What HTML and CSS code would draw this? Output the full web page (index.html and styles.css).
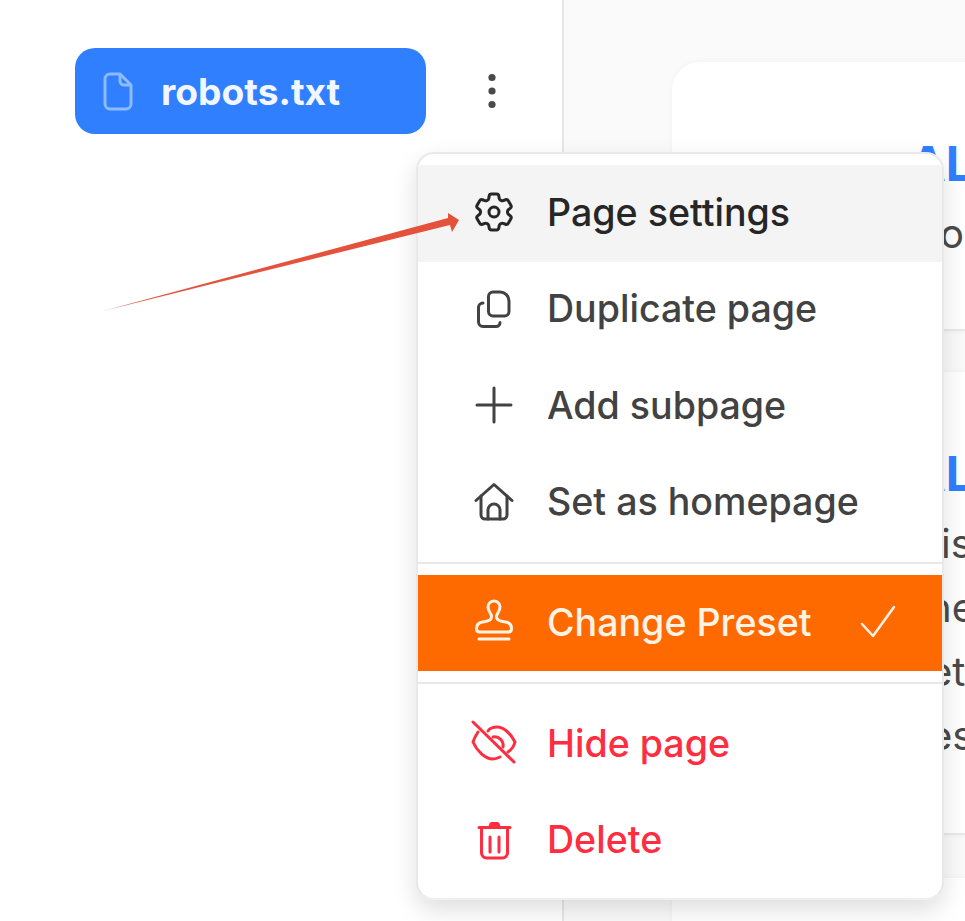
FILE: index.html
```html
<!DOCTYPE html>
<html lang="en">
<head>
<meta charset="utf-8">
<title>Page menu</title>
<link rel="stylesheet" href="styles.css">
</head>
<body>
<div class="app">
  <aside class="sidebar">
    <div class="page-row">
      <a class="page-item">
        <svg class="file-icon" viewBox="0 0 32 41"><path d="M8 3h10l11 11v19a5 5 0 0 1-5 5H8a5 5 0 0 1-5-5V8a5 5 0 0 1 5-5z"/><path d="M18 3v7a4 4 0 0 0 4 4h7"/></svg>
        <span>robots.txt</span>
      </a>
      <svg class="kebab" viewBox="0 0 12 40"><circle cx="6" cy="6.500" r="3.600"/><circle cx="6" cy="20" r="3.600"/><circle cx="6" cy="33.500" r="3.600"/></svg>
    </div>
  </aside>
  <main class="content">
    <section class="card card-one">
      <h2 class="card-title">AL</h2>
      <p class="line line-o">o</p>
    </section>
    <section class="card card-two">
      <h2 class="card-title">AL</h2>
      <p class="line line-is">is</p>
      <p class="line line-ne">ne</p>
      <p class="line line-et">et</p>
      <p class="line line-es">es</p>
    </section>
    <section class="card card-three"></section>
  </main>
</div>

<nav class="menu">
  <a class="item hover">
    <svg class="icon" viewBox="0 0 48 48"><g transform="scale(2)"><path d="M9.594 3.940c.09-.542.56-.94 1.110-.94h2.593c.55 0 1.020.398 1.110.94l.213 1.281c.063.374.313.686.645.870.074.040.147.083.22.127.325.196.72.257 1.075.124l1.217-.456a1.125 1.125 0 0 1 1.370.49l1.296 2.247a1.125 1.125 0 0 1-.26 1.431l-1.003.827c-.293.241-.438.613-.43.992a7.723 7.723 0 0 1 0 .255c-.008.378.137.75.43.991l1.004.827c.424.35.534.955.26 1.430l-1.298 2.247a1.125 1.125 0 0 1-1.369.491l-1.217-.456c-.355-.133-.75-.072-1.076.124a6.470 6.470 0 0 1-.22.128c-.331.183-.581.495-.644.869l-.213 1.281c-.09.543-.56.94-1.110.94h-2.594c-.55 0-1.019-.398-1.110-.94l-.213-1.281c-.062-.374-.312-.686-.644-.87a6.520 6.520 0 0 1-.22-.127c-.325-.196-.72-.257-1.076-.124l-1.217.456a1.125 1.125 0 0 1-1.369-.49l-1.297-2.247a1.125 1.125 0 0 1 .26-1.431l1.004-.827c.292-.24.437-.613.43-.991a6.932 6.932 0 0 1 0-.255c.007-.38-.138-.751-.43-.992l-1.004-.827a1.125 1.125 0 0 1-.26-1.430l1.297-2.247a1.125 1.125 0 0 1 1.370-.491l1.216.456c.356.133.751.072 1.076-.124.072-.044.146-.086.22-.128.332-.183.582-.495.644-.869l.214-1.280Z" stroke-width="1.500"/><circle cx="12" cy="12" r="2.500" stroke-width="1.500"/></g></svg>
    <span>Page settings</span>
  </a>
  <a class="item">
    <svg class="icon" viewBox="0 0 48 48"><path d="M23 7h7a9 9 0 0 1 9 9v10.500a4.500 4.500 0 0 1-4.500 4.500H23a4.500 4.500 0 0 1-4.500-4.500V11.500A4.500 4.500 0 0 1 23 7z"/><path d="M13 18a4.500 4.500 0 0 0-4.500 4.500V37a4.500 4.500 0 0 0 4.500 4.500h13a4 4 0 0 0 4-4"/></svg>
    <span>Duplicate page</span>
  </a>
  <a class="item">
    <svg class="icon" viewBox="0 0 48 48"><path d="M24 7v34M7 24h34"/></svg>
    <span>Add subpage</span>
  </a>
  <a class="item">
    <svg class="icon" viewBox="0 0 48 48"><path d="M6 22.500 24 6.500l18 16"/><path d="M11 18v19a4 4 0 0 0 4 4h18a4 4 0 0 0 4-4V18"/><path d="M18 41V32a6 6 0 0 1 12 0v9"/></svg>
    <span>Set as homepage</span>
  </a>
  <hr class="sep">
  <a class="item active">
    <svg class="icon" viewBox="0 0 48 48"><path d="M18 9a6 6 0 0 1 12 0c0 4.500-3.500 6.500-3.500 9.500 0 3.500 3 4.500 6 5l3 .5c3.500.6 6 3 6 6.500 0 2-1 3.500-3 3.500H9.500c-2 0-3-1.500-3-3.500 0-3.500 2.500-5.900 6-6.500l3-.5c3-.5 6-1.500 6-5 0-3-3.500-5-3.500-9.500z"/><path d="M9 41h30"/></svg>
    <span>Change Preset</span>
    <svg class="check" viewBox="0 0 36 34"><path d="M2 19 13 31 34 2"/></svg>
  </a>
  <hr class="sep">
  <a class="item danger">
    <svg class="icon" viewBox="0 0 48 48"><path d="M3 3l41 40"/><path d="M18 12c2-3 6-4 9-4 7 0 14 7 18 15-1 4-4 8-7 10"/><path d="M8 13c-2 3-4 7-5 10 4 9 12 17 20 17 3 0 5-1 7-2"/><path d="M23 18c6-1 11 4 10 10"/></svg>
    <span>Hide page</span>
  </a>
  <a class="item danger">
    <svg class="icon" viewBox="0 0 48 48"><path class="solid" d="M18 11.500l1.500-4a2 2 0 0 1 2-1.500h6a2 2 0 0 1 2 1.500l1.500 4z"/><path d="M9 11.500h31"/><path d="M11.500 13v24a5 5 0 0 0 5 5h16a5 5 0 0 0 5-5V13"/><path d="M20 21v15M29 21v15"/></svg>
    <span>Delete</span>
  </a>
</nav>

<svg class="arrow" viewBox="0 0 362 104"><polygon points="3,101 348,8 348,3 359,10 352,22 350,15"/></svg>
</body>
</html>
```
FILE: styles.css
```css
* { box-sizing: border-box; }
html, body { margin: 0; padding: 0; }
body {
  position: relative;
  width: 965px;
  height: 921px;
  overflow: hidden;
  background: #fff;
  font-family: Inter, "Liberation Sans", sans-serif;
}
.app { display: flex; height: 921px; }

.sidebar {
  flex: 0 0 564px;
  padding: 48px 0 0 75px;
  background: #fff;
  border-right: 2px solid #e6e6e6;
}
.page-row { display: flex; align-items: center; gap: 60px; }
.page-item {
  display: flex;
  align-items: center;
  gap: 27px;
  width: 351px;
  height: 86px;
  padding-left: 27px;
  border-radius: 20px;
  background: #2f7fff;
  color: #f2f7ff;
  font-size: 37.200px;
  font-weight: 700;
}
.file-icon { width: 32px; height: 41px; flex: none; fill: none; stroke: #8dbbff; stroke-width: 3; stroke-linejoin: round; }
.kebab { width: 12px; height: 40px; fill: #4a4a4a; }

.content {
  flex: 1;
  min-width: 0;
  padding: 62px 0 0 108px;
  background: #fafafa;
  overflow: hidden;
  display: flex;
  flex-direction: column;
  gap: 41px;
}
.card {
  flex: none;
  width: 400px;
  padding: 70px 0 63px;
  background: #fff;
  border-bottom: 2px solid #e8e8e8;
  box-shadow: 0 0 6px rgba(0, 0, 0, .04);
  overflow: hidden;
  white-space: nowrap;
}
.card-one { border-top-left-radius: 28px; }
.card-two { padding-bottom: 65px; }
.card-three { height: 120px; margin-top: 2px; }
.card-title {
  margin: 0 0 6px;
  padding-left: 238px;
  font-size: 48px;
  line-height: 64px;
  font-weight: 700;
  color: #2f7fff;
}
.line { margin: 0; font-size: 40px; line-height: 64px; color: #4a4a4a; }
.line-o { padding-left: 268px; }
.line-is { padding-left: 269px; }
.line-ne { padding-left: 256px; }
.line-et { padding-left: 257px; }
.line-es { padding-left: 257px; }

.menu {
  position: absolute;
  left: 416px;
  top: 152px;
  width: 528px;
  height: 748px;
  padding: 11px 0;
  background: #fff;
  border: 2px solid #e9e9e9;
  border-bottom-color: #efefef;
  border-radius: 18px;
  box-shadow: 0 10px 24px rgba(0, 0, 0, .13);
}
.item {
  display: flex;
  align-items: center;
  height: 96.500px;
  padding: 0 0 2px 52px;
  font-size: 37.600px;
  font-weight: 500;
  color: #424242;
}
.item span { margin-left: 29px; }
.item.hover { background: #f4f4f4; color: #262626; }
.item.active { background: #ff6a00; color: #fff3e6; height: 96px; }
.item.danger { color: #ff2d40; padding-bottom: 0; }
.icon {
  width: 48px;
  height: 48px;
  flex: none;
  fill: none;
  stroke: currentColor;
  stroke-width: 3;
  stroke-linecap: round;
  stroke-linejoin: round;
}
.icon .solid { fill: currentColor; stroke: none; }
.check {
  width: 36px;
  height: 34px;
  margin-left: 48px;
  flex: none;
  fill: none;
  stroke: #fff3e6;
  stroke-width: 2.500;
  stroke-linecap: round;
  stroke-linejoin: round;
}
.sep { height: 2px; margin: 11px 0; border: 0; background: #e8e8e8; }

.arrow {
  position: absolute;
  left: 100px;
  top: 210px;
  width: 362px;
  height: 104px;
  fill: #e4523b;
}
```
